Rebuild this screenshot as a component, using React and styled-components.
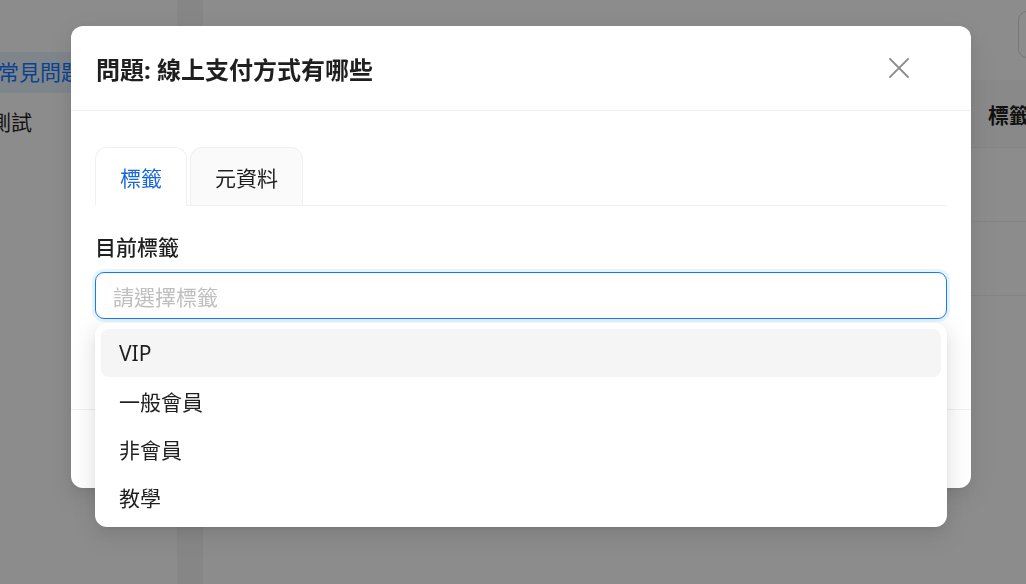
import styled, { createGlobalStyle } from 'styled-components';

const GlobalStyle = createGlobalStyle`
    html, body {
        margin: 0;
        padding: 0;
        overflow: hidden;
        background: #ffffff;
    }
    body {
        font-family: 'Noto Sans', 'Noto Sans CJK TC', sans-serif;
        color: rgba(0, 0, 0, 0.88);
    }
    * {
        box-sizing: border-box;
    }
`

const menuItems = [
    { label: '常見問題', indent: -2, active: true },
    { label: '測試', indent: -10, active: false },
]

const tagOptions = ['VIP', '一般會員', '非會員', '教學']

const App = () => {
    return (
        <>
            <GlobalStyle />
            <Page>
                <Sidebar>
                    {menuItems.map(item => (
                        <MenuItem key={item.label} $active={item.active} $indent={item.indent}>
                            {item.label}
                        </MenuItem>
                    ))}
                </Sidebar>
                <Gutter />
                <Main>
                    <Toolbar>
                        <OutlineButton>新增</OutlineButton>
                    </Toolbar>
                    <Table>
                        <HeadCell />
                        <HeadCell>標籤</HeadCell>
                        <Cell />
                        <Cell />
                        <Cell />
                        <Cell />
                    </Table>
                </Main>
            </Page>

            <Mask />
            <ModalWrap>
                <Modal>
                    <Header>
                        <Title>問題: 線上支付方式有哪些</Title>
                        <CloseButton aria-label='close'>
                            <svg width='20' height='20' viewBox='0 0 20 20'>
                                <path d='M1 1 L19 19 M19 1 L1 19' stroke='#8c8c8c' strokeWidth='1.8' strokeLinecap='square' />
                            </svg>
                        </CloseButton>
                    </Header>
                    <Body>
                        <TabBar>
                            <Tab $active>標籤</Tab>
                            <Tab>元資料</Tab>
                        </TabBar>
                        <FormItem>
                            <Label>目前標籤</Label>
                            <SelectBox>
                                <Placeholder>請選擇標籤</Placeholder>
                                <Dropdown>
                                    {tagOptions.map((opt, index) => (
                                        <Option key={opt} $active={index === 0}>{opt}</Option>
                                    ))}
                                </Dropdown>
                            </SelectBox>
                        </FormItem>
                    </Body>
                    <Footer>
                        <FooterButton>取消</FooterButton>
                        <FooterButton $primary>儲存</FooterButton>
                    </Footer>
                </Modal>
            </ModalWrap>
        </>
    )
}
export default App;

const Page = styled.div`
    display: flex;
    width: 1140px;
    height: 584px;
`
const Sidebar = styled.div`
    width: 177px;
    flex-shrink: 0;
    background: #ffffff;
    padding-top: 52px;
    display: flex;
    flex-direction: column;
    gap: 9px;
    overflow: hidden;
`
const MenuItem = styled.div`
    height: 41px;
    line-height: 41px;
    font-size: 21px;
    white-space: nowrap;
    text-indent: ${props => props.$indent}px;
    color: ${props => props.$active ? '#1677ff' : 'rgba(0, 0, 0, 0.88)'};
    background: ${props => props.$active ? '#e6f4ff' : 'transparent'};
`
const Gutter = styled.div`
    width: 26px;
    flex-shrink: 0;
    background: #f5f5f5;
`
const Main = styled.div`
    flex: 1;
    background: #ffffff;
    padding: 11px 24px 0 24px;
    display: flex;
    flex-direction: column;
    gap: 22px;
`
const Toolbar = styled.div`
    display: flex;
    justify-content: flex-end;
`
const OutlineButton = styled.div`
    width: 98px;
    height: 47px;
    border: 1px solid #d9d9d9;
    border-radius: 9px;
    font-size: 21px;
    line-height: 45px;
    padding-left: 24px;
    white-space: nowrap;
    overflow: hidden;
`
const Table = styled.div`
    display: grid;
    grid-template-columns: 745px 1fr;
    grid-auto-rows: 74px;
    grid-template-rows: 68px;
`
const HeadCell = styled.div`
    background: #fafafa;
    border-bottom: 1px solid #f0f0f0;
    font-size: 21px;
    font-weight: 700;
    padding: 0 16px;
    display: flex;
    align-items: center;
`
const Cell = styled.div`
    border-bottom: 1px solid #f0f0f0;
    font-size: 21px;
    padding: 0 16px;
    display: flex;
    align-items: center;
`
const Mask = styled.div`
    position: fixed;
    inset: 0;
    background: rgba(0, 0, 0, 0.45);
`
const ModalWrap = styled.div`
    position: fixed;
    inset: 0;
    padding: 26px 0 0 71px;
`
const Modal = styled.div`
    width: 900px;
    background: #ffffff;
    border-radius: 12px;
    box-shadow: 0 6px 16px 0 rgba(0, 0, 0, 0.08), 0 3px 6px -4px rgba(0, 0, 0, 0.12), 0 9px 28px 8px rgba(0, 0, 0, 0.05);
`
const Header = styled.div`
    height: 85px;
    padding: 0 52px 0 25px;
    border-bottom: 1px solid #f0f0f0;
    display: flex;
    align-items: center;
    justify-content: space-between;
`
const Title = styled.div`
    font-size: 24px;
    font-weight: 700;
    color: rgba(0, 0, 0, 0.88);
`
const CloseButton = styled.div`
    width: 40px;
    height: 40px;
    display: flex;
    align-items: center;
    justify-content: center;
`
const Body = styled.div`
    padding: 36px 24px 0 24px;
    height: 298px;
`
const TabBar = styled.div`
    display: flex;
    gap: 3px;
    border-bottom: 1px solid #f0f0f0;
    height: 59px;
`
const Tab = styled.div`
    height: 59px;
    margin-bottom: -1px;
    padding: 0 24px;
    border: 1px solid #f0f0f0;
    border-bottom-color: ${props => props.$active ? '#ffffff' : '#f0f0f0'};
    border-radius: 12px 12px 0 0;
    background: ${props => props.$active ? '#ffffff' : '#fafafa'};
    color: ${props => props.$active ? '#1668dc' : 'rgba(0, 0, 0, 0.88)'};
    font-size: 21px;
    display: flex;
    align-items: center;
`
const FormItem = styled.div`
    margin-top: 25px;
    display: flex;
    flex-direction: column;
    gap: 9px;
`
const Label = styled.div`
    font-size: 21px;
    font-weight: 500;
    line-height: 32px;
`
const SelectBox = styled.div`
    position: relative;
    height: 47px;
    border: 1px solid #1677ff;
    border-radius: 9px;
    box-shadow: 0 0 0 3px rgba(5, 145, 255, 0.1);
    padding: 0 17px;
    display: flex;
    align-items: center;
`
const Placeholder = styled.span`
    font-size: 21px;
    color: #bfbfbf;
`
const Dropdown = styled.div`
    position: absolute;
    top: calc(100% + 5px);
    left: -1px;
    right: -1px;
    padding: 6px;
    background: #ffffff;
    border-radius: 12px;
    box-shadow: 0 6px 16px 0 rgba(0, 0, 0, 0.08), 0 3px 6px -4px rgba(0, 0, 0, 0.12), 0 9px 28px 8px rgba(0, 0, 0, 0.05);
    z-index: 2;
`
const Option = styled.div`
    height: 48px;
    padding: 0 18px;
    border-radius: 8px;
    font-size: 21px;
    display: flex;
    align-items: center;
    background: ${props => props.$active ? '#f5f5f5' : 'transparent'};
    color: rgba(0, 0, 0, 0.88);
`
const Footer = styled.div`
    height: 79px;
    border-top: 1px solid #f0f0f0;
    padding: 0 24px;
    display: flex;
    align-items: center;
    justify-content: flex-end;
    gap: 12px;
`
const FooterButton = styled.div`
    height: 46px;
    padding: 0 22px;
    border-radius: 9px;
    font-size: 21px;
    display: flex;
    align-items: center;
    border: 1px solid ${props => props.$primary ? '#1677ff' : '#d9d9d9'};
    background: ${props => props.$primary ? '#1677ff' : '#ffffff'};
    color: ${props => props.$primary ? '#ffffff' : 'rgba(0, 0, 0, 0.88)'};
`
